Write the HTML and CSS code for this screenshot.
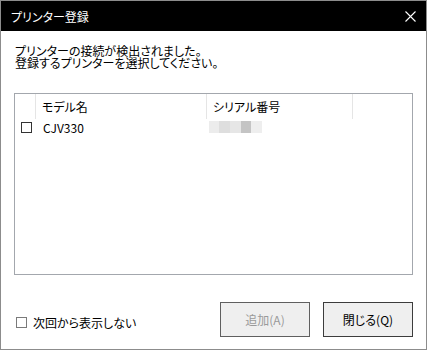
FILE: index.html
```html
<!DOCTYPE html>
<html lang="ja">
<head>
    <meta charset="UTF-8">
    <meta name="viewport" content="width=device-width, initial-scale=1.0">
    <title>プリンター登録</title>
    <link rel="stylesheet" href="styles.css">
</head>
<body>
    <div class="dialog">
        <div class="title-bar">
            <span class="title">プリンター登録</span>
            <button class="close-x" aria-label="閉じる">
                <svg width="11" height="11" viewBox="0 0 11 11" aria-hidden="true">
                    <path d="M0.5 0.5 L10.5 10.5 M10.5 0.5 L0.5 10.5" stroke="#fff" stroke-width="1.1" fill="none"/>
                </svg>
            </button>
        </div>

        <div class="content">
            <p class="message">プリンターの接続が検出されました。<br>登録するプリンターを選択してください。</p>

            <div class="list-view">
                <div class="list-header">
                    <div class="col col-check"></div>
                    <div class="col col-model">モデル名</div>
                    <div class="col col-serial">シリアル番号</div>
                    <div class="col col-rest"></div>
                </div>
                <div class="list-row">
                    <div class="row-model">
                        <span class="checkbox"></span>
                        <span>CJV330</span>
                    </div>
                    <div class="row-serial">
                        <!-- serial number is blurred out -->
                        <span class="blur b1"></span><span class="blur b2"></span><span class="blur b3"></span><span class="blur b4"></span><span class="blur b5"></span>
                    </div>
                </div>
            </div>

            <div class="footer">
                <label class="dont-show">
                    <span class="checkbox light"></span>
                    <span>次回から表示しない</span>
                </label>
                <div class="buttons">
                    <button class="btn" disabled>追加(A)</button>
                    <button class="btn primary">閉じる(Q)</button>
                </div>
            </div>
        </div>
    </div>
</body>
</html>
```

FILE: styles.css
```css
body {
    margin: 0;
    padding: 0;
    background-color: #fff;
    font-family: "Noto Sans CJK JP", "Noto Sans", sans-serif;
    font-size: 12px;
    font-feature-settings: "palt";
    color: #000;
}

.dialog {
    width: 427px;
    height: 350px;
    box-sizing: border-box;
    border: 1px solid #8c8c8c;
    background-color: #fff;
    display: flex;
    flex-direction: column;
}

/* Title bar */
.title-bar {
    height: 30px;
    background-color: #000;
    display: flex;
    align-items: center;
    justify-content: space-between;
    padding: 0 10px 0 10px;
}

.title {
    color: #fff;
    font-size: 12px;
    line-height: 12px;
    padding-top: 1px;
}

.close-x {
    background: none;
    border: none;
    padding: 0;
    width: 11px;
    height: 11px;
    display: flex;
    margin-right: 0;
}

/* Body */
.content {
    flex: 1;
    padding: 14px 13px 0 13px;
    display: flex;
    flex-direction: column;
}

.message {
    margin: 0 0 0 1px;
    line-height: 12px;
    font-size: 12px;
}

.list-view {
    margin-top: 24px;
    height: 182px;
    box-sizing: border-box;
    border: 1px solid #a3a7ad;
}

.list-header {
    display: flex;
    height: 25px;
}

.col {
    box-sizing: border-box;
    border-right: 1px solid #e5e5e5;
    line-height: 26px;
    padding-left: 6px;
}

.col-check {
    width: 21px;
    padding: 0;
}

.col-model {
    width: 171px;
}

.col-serial {
    width: 146px;
}

.col-rest {
    border-right: none;
    flex: 1;
}

.list-row {
    display: flex;
    height: 16px;
    align-items: center;
}

.row-model {
    width: 192px;
    display: flex;
    align-items: center;
    padding-left: 6px;
    gap: 11px;
    box-sizing: border-box;
}

.checkbox {
    width: 11px;
    height: 11px;
    box-sizing: border-box;
    border: 1px solid #333;
    background-color: #fff;
    flex-shrink: 0;
}

.checkbox.light {
    border-color: #7a7a7a;
}

.row-serial {
    display: flex;
    padding-left: 2px;
    height: 12px;
}

.blur {
    display: block;
    height: 12px;
}

.b1 { width: 10px; background-color: #ececec; }
.b2 { width: 11px; background-color: #dedede; }
.b3 { width: 11px; background-color: #e6e6e6; }
.b4 { width: 10px; background-color: #c4c4c4; }
.b5 { width: 11px; background-color: #eeeeee; }

/* Footer */
.footer {
    margin-top: 27px;
    display: flex;
    align-items: center;
    justify-content: space-between;
}

.dont-show {
    display: flex;
    align-items: center;
    gap: 6px;
    padding-left: 2px;
    padding-top: 5px;
}

.buttons {
    display: flex;
    gap: 13px;
}

.btn {
    width: 90px;
    height: 35px;
    box-sizing: border-box;
    background-color: #efefef;
    border: 1px solid #3c3c3c;
    font-family: inherit;
    font-size: 12px;
    font-feature-settings: "palt";
    color: #000;
    padding: 0;
}

.btn:disabled {
    border-color: #5f5f5f;
    color: #9a9a9a;
}
```
